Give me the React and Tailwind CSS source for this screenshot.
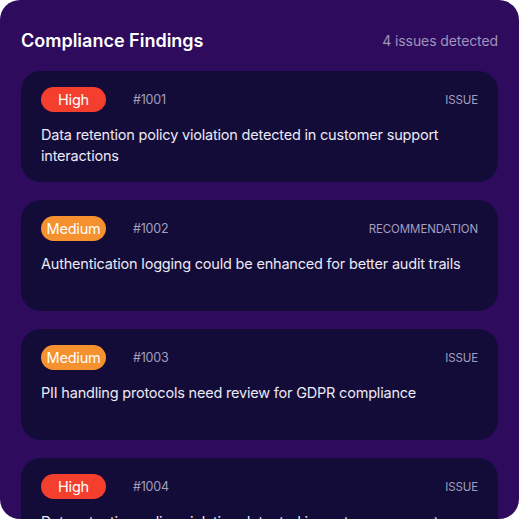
export default function App() {
  const items = [
    { sev: "High", id: "#1001", type: "ISSUE", text: "Data retention policy violation detected in customer support interactions" },
    { sev: "Medium", id: "#1002", type: "RECOMMENDATION", text: "Authentication logging could be enhanced for better audit trails" },
    { sev: "Medium", id: "#1003", type: "ISSUE", text: "PII handling protocols need review for GDPR compliance" },
    { sev: "High", id: "#1004", type: "ISSUE", text: "Data retention policy violation detected in customer support interactions" },
  ];
  return (
    <div className="w-[519px] h-[519px] overflow-hidden rounded-[20px] bg-[#2e0b5c] px-[21px] pt-[29px]" style={{ fontFamily: "Inter, 'Noto Sans', sans-serif" }}>
      <div className="flex items-center justify-between h-[24px]">
        <h2 className="text-[18px] font-semibold text-white leading-none">Compliance Findings</h2>
        <span className="text-[14px] tracking-[-0.1px] text-[#9f95bd] leading-none">4 issues detected</span>
      </div>
      <div className="mt-[18px] flex flex-col gap-[18px]">
        {items.map((it) => (
          <div key={it.id} className="h-[111px] shrink-0 rounded-[20px] bg-[#130c38] px-[20px] pt-[16px]">
            <div className="flex items-center h-[25px]">
              <span className={`w-[65px] h-[25px] rounded-full flex items-center justify-center text-[14.5px] tracking-[-0.2px] text-white ${it.sev === "High" ? "bg-[#f43f2e]" : "bg-[#f6912f]"}`}>{it.sev}</span>
              <span className="ml-[27px] mt-[2px] text-[12.5px] tracking-[-0.2px] text-[#a39fbf]">{it.id}</span>
              <span className="ml-auto mt-[2px] text-[11.5px] tracking-[-0.1px] text-[#a39fbf]">{it.type}</span>
            </div>
            <p className="mt-[12px] text-[14.5px] tracking-[-0.2px] leading-[21px] text-[#ece9f5]">{it.text}</p>
          </div>
        ))}
      </div>
    </div>
  );
}
